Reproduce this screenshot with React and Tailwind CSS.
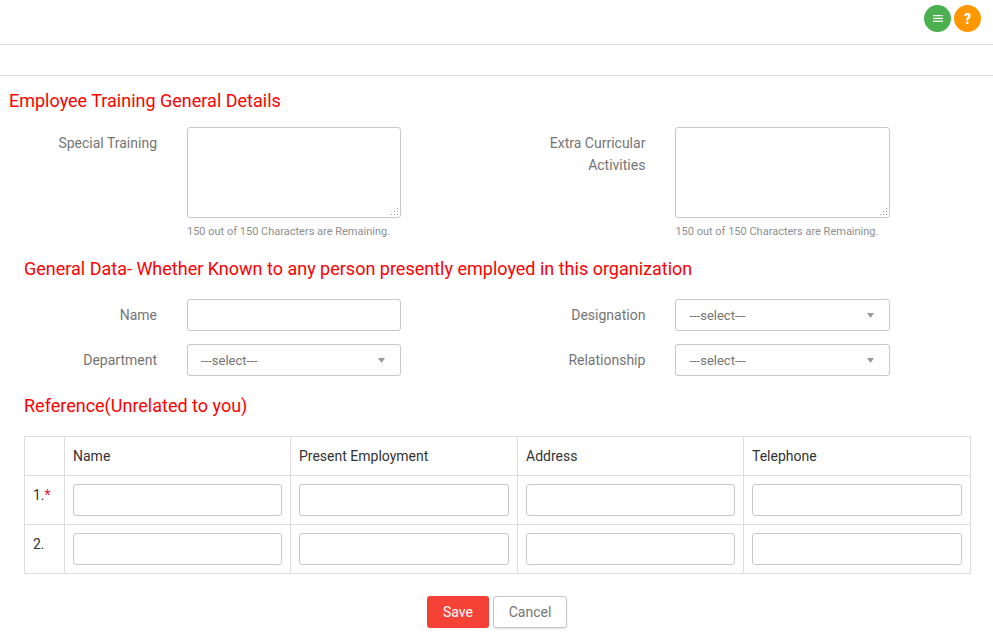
const fieldClass = "h-8 w-full rounded-[3px] border border-[#c8c8c8] bg-white";

function Label({ children }) {
  return (
    <div className="w-[157px] shrink-0 pt-[5px] text-right text-sm leading-[22px] text-[#757575]">
      {children}
    </div>
  );
}

function Area({ label }) {
  return (
    <div className="flex items-start">
      <Label>{label}</Label>
      <div className="ml-[30px] w-[214.4px]">
        <div className="relative h-[91px] rounded-[3px] border border-[#c8c8c8]">
          <svg className="absolute bottom-[1px] right-[1px]" width="9" height="9" viewBox="0 0 9 9" fill="#9a9a9a">
            <rect x="7" y="1" width="1" height="1" />
            <rect x="7" y="4" width="1" height="1" />
            <rect x="4" y="4" width="1" height="1" />
            <rect x="7" y="7" width="1" height="1" />
            <rect x="4" y="7" width="1" height="1" />
            <rect x="1" y="7" width="1" height="1" />
          </svg>
        </div>
        <p className="mt-[6px] whitespace-nowrap pt-[1px] text-[11px] leading-[14px] text-[#8f8f8f]">
          150 out of 150 Characters are Remaining.
        </p>
      </div>
    </div>
  );
}

function Select() {
  return (
    <div className={`${fieldClass} flex items-center justify-between pl-[13px] pr-[15px] text-[13px] text-[#757575]`}>
      <span className="pt-[1px]">---select---</span>
      <svg width="7" height="5" viewBox="0 0 7 5" fill="#999">
        <path d="M0 0h7L3.5 5z" />
      </svg>
    </div>
  );
}

function Field({ label, select }) {
  return (
    <div className="flex items-start">
      <Label>{label}</Label>
      <div className="ml-[30px] w-[214.4px]">
        {select ? <Select /> : <div className={fieldClass} />}
      </div>
    </div>
  );
}

function Heading({ children, className }) {
  return <h2 className={`text-lg leading-6 text-[#ff0000] ${className}`}>{children}</h2>;
}

const colClass = "border border-[#dedede] p-2 align-top";

function RefRow({ label, required }) {
  return (
    <tr>
      <td className={`${colClass} text-sm leading-5 text-[#333]`}>
        <div className="pt-[1px]">
          {label}
          {required && <span className="text-[#e8112d]">*</span>}
        </div>
      </td>
      {[0, 1, 2, 3].map((i) => (
        <td key={i} className={colClass}>
          <div className={fieldClass} />
        </td>
      ))}
    </tr>
  );
}

export default function App() {
  return (
    <div className="min-h-[641px] bg-white font-['Roboto',sans-serif]">
      <div className="flex h-[45px] items-start justify-end gap-[3px] border-b border-[#dedede] pr-3 pt-[5px]">
        <button className="flex h-[27px] w-[27px] items-center justify-center rounded-full bg-[#4caf50]">
          <svg width="10" height="7" viewBox="0 0 10 7" fill="#fff">
            <rect y="0" width="8" height="1.2" />
            <rect x="8.6" y="0" width="1.4" height="1.2" />
            <rect y="2.8" width="10" height="1.2" />
            <rect y="5.6" width="10" height="1.2" />
          </svg>
        </button>
        <button className="flex h-[27px] w-[27px] items-center justify-center rounded-full bg-[#ff9800] text-sm font-black text-white">
          ?
        </button>
      </div>
      <div className="h-[31px] border-b border-[#dedede]" />

      <Heading className="ml-[9px] mt-[13px]">Employee Training General Details</Heading>

      <div className="mt-[14px] grid grid-cols-[488.4px_1fr]">
        <Area label="Special Training" />
        <Area label={<>Extra Curricular<br />Activities</>} />
      </div>

      <Heading className="ml-6 mt-[18px]">General Data- Whether Known to any person presently employed in this organization</Heading>

      <div className="mt-[18px] grid grid-cols-[488.4px_1fr] gap-y-[13px]">
        <Field label="Name" />
        <Field label="Designation" select />
        <Field label="Department" select />
        <Field label="Relationship" select />
      </div>

      <Heading className="ml-6 mt-[18px]">Reference(Unrelated to you)</Heading>

      <div className="ml-6 mt-[18px] w-[946px]">
        <table className="w-full table-fixed border-collapse">
          <colgroup>
            <col className="w-[40px]" />
            <col className="w-[226px]" />
            <col className="w-[227px]" />
            <col className="w-[226px]" />
            <col className="w-[227px]" />
          </colgroup>
          <thead>
            <tr className="h-[39px] text-left text-sm font-normal text-[#333]">
              <th className="border border-[#dedede] px-2 font-normal" />
              <th className="border border-[#dedede] px-2 font-normal">Name</th>
              <th className="border border-[#dedede] px-2 font-normal">Present Employment</th>
              <th className="border border-[#dedede] px-2 font-normal">Address</th>
              <th className="border border-[#dedede] px-2 font-normal">Telephone</th>
            </tr>
          </thead>
          <tbody>
            <RefRow label="1." required />
            <RefRow label="2." />
          </tbody>
        </table>
      </div>

      <div className="mt-[22px] flex justify-center gap-1">
        <button className="h-8 w-[62px] rounded-[3px] bg-[#f44336] pl-[1px] text-sm text-white">Save</button>
        <button className="h-8 w-[74px] rounded-[3px] border border-[#c8c8c8] bg-white pl-[1px] text-sm text-[#757575] shadow-[0_1px_2px_rgba(0,0,0,0.12)]">
          Cancel
        </button>
      </div>
    </div>
  );
}
